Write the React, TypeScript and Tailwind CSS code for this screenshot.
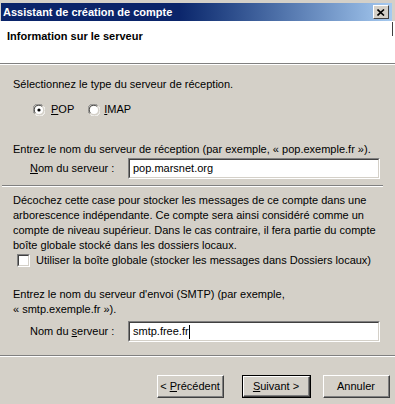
const Sep = () => (
  <div className="flex flex-col">
    <div className="h-px bg-[#808080]" />
    <div className="h-px bg-white" />
  </div>
);

const Radio = ({ checked }: { checked?: boolean }) => (
  <svg width="12" height="12" viewBox="0 0 12 12" className="shrink-0">
    <circle cx="6" cy="6" r="5.5" fill="#d4d0c8" />
    <path d="M1.5 9.5 A5.5 5.5 0 0 1 9.5 1.5" stroke="#808080" strokeWidth="1" fill="none" />
    <path d="M2.5 9 A4.5 4.5 0 0 1 9 2.5" stroke="#404040" strokeWidth="1" fill="none" />
    <path d="M10.5 2.5 A5.5 5.5 0 0 1 2.5 10.5" stroke="#ffffff" strokeWidth="1" fill="none" />
    <circle cx="6" cy="6" r="4" fill="#ffffff" />
    {checked && <circle cx="6" cy="6" r="1.6" fill="#000000" />}
  </svg>
);

const Field = ({ value, caret }: { value: string; caret?: boolean }) => (
  <div className="w-[252px] h-[21px] border-t border-l border-[#808080] border-b border-r border-b-white border-r-white">
    <div className="h-full border-t border-l border-[#404040] border-b border-r border-b-[#d4d0c8] border-r-[#d4d0c8] bg-white flex items-center pl-[3px]">
      <span>{value}</span>
      {caret && <span className="w-px h-[14px] bg-black" />}
    </div>
  </div>
);

const Button = ({ children, isDefault, width }: { children: React.ReactNode; isDefault?: boolean; width: string }) => (
  <div className={`${width} h-[23px] ${isDefault ? "border border-black" : ""}`}>
    <div className="h-full border-t border-l border-white border-b border-r border-b-[#404040] border-r-[#404040]">
      <div className="h-full border-b border-r border-[#808080] border-t-0 border-l-0 flex items-center justify-center">
        {children}
      </div>
    </div>
  </div>
);

export default function App() {
  return (
    <div className="w-[395px] h-[404px] bg-[#d4d0c8] overflow-hidden text-[11px] text-black font-['Liberation_Sans',Arial,sans-serif] flex flex-col">
      <div className="h-[3px]" />
      <div className="h-[18px] ml-px mr-[3px] flex items-center bg-gradient-to-r from-[#0a246a] from-45% to-[#a6caf0] pr-[3px]">
        <span className="text-white font-bold pl-[2px] bg-[#0a246a] pr-2 leading-[18px]">Assistant de création de compte</span>
        <div className="flex-1" />
        <div className="w-[16px] h-[14px] bg-[#d4d0c8] border-t border-l border-white border-b border-r border-b-[#404040] border-r-[#404040] flex items-center justify-center">
          <svg width="8" height="7" viewBox="0 0 8 7">
            <path d="M0.5 0.5 L7 6.5 M7 0.5 L0.5 6.5" stroke="#000" strokeWidth="1.6" />
          </svg>
        </div>
      </div>
      <div className="h-[42px] bg-white flex">
        <div className="flex-1 pl-[7px] pt-[7px] font-bold">Information sur le serveur</div>
        <div className="w-px h-[14px] bg-[#404040] mr-[2px] mt-px" />
      </div>
      <Sep />
      <div className="px-[13px] flex flex-col leading-[15px]">
        <div className="mt-[12px]">Sélectionnez le type du serveur de réception.</div>
        <div className="mt-[10px] flex items-center h-[15px] pl-[20px]">
          <Radio checked />
          <span className="ml-[6px]"><u>P</u>OP</span>
          <span className="ml-[14px]" />
          <Radio />
          <span className="ml-[4px]"><u>I</u>MAP</span>
        </div>
        <div className="mt-[25px]">Entrez le nom du serveur de réception (par exemple, « pop.exemple.fr »).</div>
        <div className="mt-[1px] flex items-center pl-[17px]">
          <span className="w-[98px]"><u>N</u>om du serveur :</span>
          <Field value="pop.marsnet.org" />
        </div>
      </div>
      <div className="mt-[6px] mx-[2px] mr-[12px]">
        <Sep />
      </div>
      <div className="px-[13px] flex flex-col leading-[15px]">
        <div className="mt-[6px]">
          Décochez cette case pour stocker les messages de ce compte dans une arborescence indépendante. Ce compte sera ainsi considéré comme un compte de niveau supérieur. Dans le cas contraire, il fera partie du compte boîte globale stocké dans les dossiers locaux.
        </div>
        <div className="mt-[1px] flex items-center h-[13px] pl-[4px]">
          <div className="w-[13px] h-[13px] border-t border-l border-[#808080] border-b border-r border-b-white border-r-white">
            <div className="h-full bg-white border-t border-l border-[#404040] border-b border-r border-b-[#d4d0c8] border-r-[#d4d0c8]" />
          </div>
          <span className="ml-[6px]">Utiliser la boîte globale (stocker les messages dans Dossiers locaux)</span>
        </div>
        <div className="mt-[20px]">
          Entrez le nom du serveur d'envoi (SMTP) (par exemple,
          <br />« smtp.exemple.fr »).
        </div>
        <div className="mt-[4px] flex items-center pl-[17px]">
          <span className="w-[98px]">Nom du <u>s</u>erveur :</span>
          <Field value="smtp.free.fr" caret />
        </div>
      </div>
      <div className="mt-[13px]">
        <Sep />
      </div>
      <div className="mt-[18px] flex justify-end pr-[5px]">
        <Button width="w-[67px]"><span>&lt; <u>P</u>récédent</span></Button>
        <div className="w-[18px]" />
        <Button isDefault width="w-[69px]"><span><u>S</u>uivant &gt;</span></Button>
        <div className="w-[12px]" />
        <Button width="w-[67px]">Annuler</Button>
      </div>
    </div>
  );
}
